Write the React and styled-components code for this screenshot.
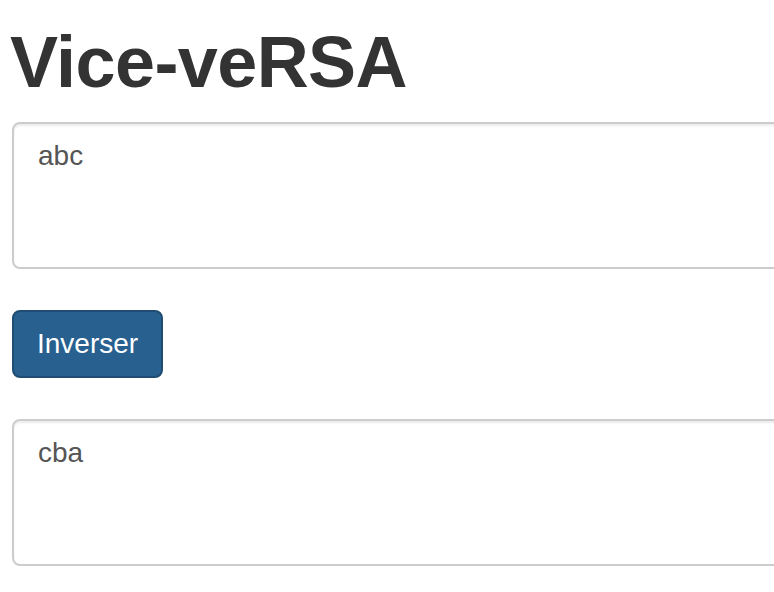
import React, { useState } from "react";
import styled, { createGlobalStyle } from "styled-components";

const GlobalStyle = createGlobalStyle`
  html, body {
    margin: 0;
    padding: 0;
    background: #fff;
    overflow: hidden;
  }
  body {
    font-family: "Liberation Sans", Arial, sans-serif;
    color: #333;
  }
  * {
    box-sizing: border-box;
  }
`;

const Page = styled.div`
  width: 1000px;
  padding: 23px 12px 0 12px;
  display: flex;
  flex-direction: column;
  align-items: flex-start;
`;

const Title = styled.h1`
  margin: 0 0 20px -2px;
  font-size: 72px;
  font-weight: bold;
  line-height: 79px;
  color: #333;
  letter-spacing: -0.6px;
`;

const TextBox = styled.textarea`
  display: block;
  width: 100%;
  height: 147px;
  padding: 12px 24px;
  font: inherit;
  font-size: 28px;
  line-height: 40px;
  color: #555;
  background: #fff;
  border: 2px solid #ccc;
  border-radius: 8px;
  box-shadow: inset 0 2px 2px rgba(0, 0, 0, 0.075);
  resize: none;
  outline: none;
`;

const Button = styled.button`
  margin: 41px 0;
  padding: 12px 23px;
  font: inherit;
  font-size: 28px;
  line-height: 40px;
  color: #fff;
  background: #28608f;
  border: 2px solid #204d74;
  border-radius: 8px;
  cursor: pointer;
`;

const App = () => {
  const [source, setSource] = useState("abc");
  const [result, setResult] = useState("cba");

  const inverse = () => {
    setResult(source.split("").reverse().join(""));
  };

  return (
    <Page>
      <GlobalStyle />
      <Title>Vice-veRSA</Title>
      <TextBox rows={3} value={source} onChange={e => setSource(e.target.value)} />
      <Button onClick={inverse}>Inverser</Button>
      <TextBox rows={3} value={result} readOnly />
    </Page>
  );
};

export default App;
